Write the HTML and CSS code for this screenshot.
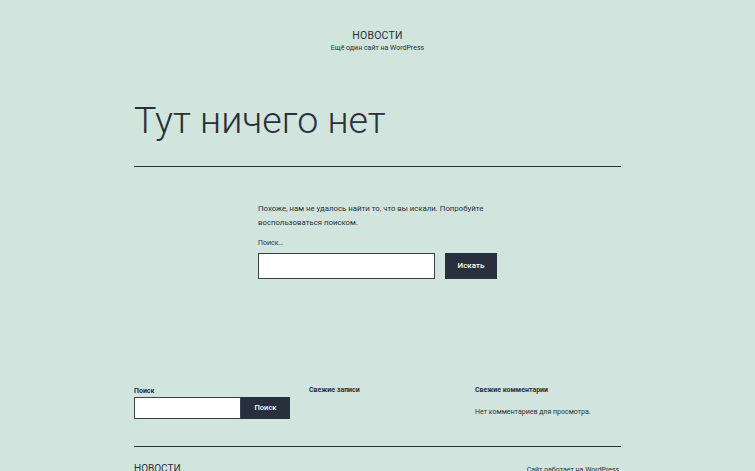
FILE: index.html
```html
<!DOCTYPE html>
<html lang="ru">
<head>
<meta charset="utf-8">
<title>Тут ничего нет</title>
<link rel="stylesheet" href="styles.css">
</head>
<body>
<header class="site-header">
  <p class="site-title">НОВОСТИ</p>
  <p class="site-desc">Ещё один сайт на WordPress</p>
</header>
<main class="site-main">
  <h1 class="page-title">Тут ничего нет</h1>
  <div class="page-content">
    <p class="intro">Похоже, нам не удалось найти то, что вы искали. Попробуйте воспользоваться поиском.</p>
    <form class="search-form">
      <label class="search-label" for="s1">Поиск…</label>
      <div class="search-row">
        <input id="s1" class="search-field" type="search">
        <button class="search-submit" type="button">Искать</button>
      </div>
    </form>
  </div>
</main>
<footer class="site-footer">
  <div class="widgets">
    <section class="widget">
      <label class="widget-label" for="s2">Поиск</label>
      <div class="widget-search">
        <input id="s2" class="widget-field" type="search">
        <button class="widget-submit" type="button">Поиск</button>
      </div>
    </section>
    <section class="widget">
      <h2 class="widget-title">Свежие записи</h2>
    </section>
    <section class="widget">
      <h2 class="widget-title">Свежие комментарии</h2>
      <p class="widget-text">Нет комментариев для просмотра.</p>
    </section>
  </div>
  <div class="site-info">
    <span class="footer-title">НОВОСТИ</span>
    <span class="powered">Сайт работает на WordPress.</span>
  </div>
</footer>
</body>
</html>
```

FILE: styles.css
```css
* { box-sizing: border-box; }

html, body {
  margin: 0;
  padding: 0;
  background: #d1e4dd;
  color: #28303d;
  font-family: Roboto, "Liberation Sans", Arial, sans-serif;
}

body { overflow: hidden; height: 471px; }

p, h1, h2 { margin: 0; }

.site-header {
  padding-top: 29px;
  text-align: center;
}

.site-title {
  font-size: 10.5px;
  line-height: 13px;
  letter-spacing: 0.2px;
}

.site-desc {
  margin-top: 2px;
  font-size: 7px;
  line-height: 9px;
}

.site-main {
  width: 487px;
  margin: 0 auto;
}

.page-title {
  margin-top: 45px;
  font-size: 37.6px;
  line-height: 45px;
  font-weight: 300;
  padding-bottom: 22.5px;
  border-bottom: 1.5px solid #28303d;
}

.page-content {
  width: 239px;
  margin: 35px auto 0;
}

.intro {
  font-size: 7.8px;
  line-height: 14px;
}

.search-form { margin-top: 8px; }

.search-label {
  display: block;
  font-size: 7px;
  line-height: 10px;
}

.search-row {
  display: flex;
  gap: 10px;
  margin-top: 5px;
}

.search-field {
  width: 177px;
  height: 26px;
  margin: 0;
  background: #fff;
  border: 1.5px solid #39414d;
  border-radius: 0;
  padding: 0;
}

.search-submit {
  width: 52px;
  height: 26px;
  margin: 0;
  border: 0;
  background: #28303d;
  color: #fff;
  font-family: inherit;
  font-size: 8px;
  font-weight: 500;
  padding: 0;
}

.site-footer {
  width: 487px;
  margin: 106px auto 0;
}

.widgets {
  display: grid;
  grid-template-columns: 156px 147px 146px;
  column-gap: 19px;
  height: 61.5px;
}

.widget-title {
  font-size: 7px;
  line-height: 10px;
  font-weight: 700;
}

.widget-label {
  display: block;
  margin-top: 1px;
  font-size: 7px;
  line-height: 10px;
  font-weight: 700;
}

.widget-search {
  display: flex;
  margin-top: 1px;
}

.widget-field {
  width: 107px;
  height: 22px;
  margin: 0;
  padding: 0;
  background: #fff;
  border: 1.5px solid #39414d;
  border-radius: 0;
}

.widget-submit {
  width: 50px;
  height: 22px;
  margin: 0;
  padding: 0;
  border: 0;
  background: #28303d;
  color: #fff;
  font-family: inherit;
  font-size: 7.5px;
  font-weight: 500;
}

.widget-text {
  margin-top: 12px;
  font-size: 7px;
  line-height: 10px;
}

.site-info {
  display: flex;
  justify-content: space-between;
  align-items: baseline;
  border-top: 1.5px solid #28303d;
  padding-top: 15px;
}

.footer-title {
  font-size: 10px;
  line-height: 13px;
}

.powered {
  font-size: 7px;
  line-height: 10px;
}
```
